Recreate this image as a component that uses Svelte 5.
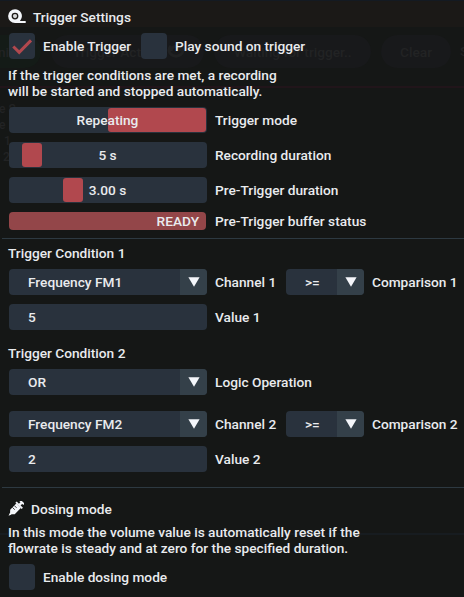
<script>
  const conditions = [
    { n: 1, channel: 'Frequency FM1', value: '5' },
    { n: 2, channel: 'Frequency FM2', value: '2', logic: 'OR' }
  ];
</script>

{#snippet combo(text, small = false)}
  <div class="field combo" class:small>
    <span>{text}</span>
    <div class="arrow">
      <svg width="12" height="10" viewBox="0 0 12 10"><path d="M.4 .3H11.6L6 9.8z" fill="#f4f6fa" /></svg>
    </div>
  </div>
{/snippet}

<div class="panel">
  <div class="backdrop" aria-hidden="true">
    <div class="titleband"></div>
    <div class="pill green" style="left:-40px;width:81px"><span style="left:38px">ni</span></div>
    <div class="pill" style="left:51px;width:153px"><span style="left:22px">Trigger Act</span>
      <svg style="left:116px" width="18" height="18" viewBox="0 0 18 18"><path d="M4 4a7 6 0 1 0 10 0M4 9a4 4 0 0 1 9 0" fill="none" stroke="#202122" stroke-width="3" /></svg>
    </div>
    <div class="pill" style="left:214px;width:157px"><span style="left:20px">Waiting for trigger..</span></div>
    <div class="pill" style="left:381px;width:70px"><span style="left:19px">Clear</span></div>
    <span class="ghost" style="left:460px;top:43px">S</span>
    <div class="redline"></div>
    <span class="ghost tiny" style="left:-1px;top:101px">e S</span>
    <span class="ghost tiny" style="left:-1px;top:117px">e</span>
    <span class="ghost tiny" style="left:4px;top:133px">1</span>
    <span class="ghost tiny" style="left:3px;top:149px">2</span>
    <div class="trace"></div>
  </div>

  <div class="content">
    <div class="head">
      <svg width="18" height="16" viewBox="0 0 18 16">
        <path fill-rule="evenodd" fill="#f4f6fa" d="M7 .2a6.8 6.8 0 0 1 5.7 10.6l-.8 1.3H17.7V14H7A6.9 6.9 0 0 1 7 .2zM7 3.7a3.4 3.4 0 1 0 0 6.8a3.4 3.4 0 0 0 0-6.8z" />
        <circle cx="7" cy="7.1" r="2.1" fill="#d5d6d8" />
      </svg>
      <span class="title">Trigger Settings</span>
    </div>
    <div class="row checks">
      <div class="box">
        <svg width="26" height="26" viewBox="0 0 26 26"><path d="M4.3 13.5L10.2 19.4L22 7.4" fill="none" stroke="#b1484e" stroke-width="3" /></svg>
      </div>
      <span class="enable">Enable Trigger</span>
      <div class="box"></div>
      <span>Play sound on trigger</span>
    </div>
    <p class="first">If the trigger conditions are met, a recording<br />will be started and stopped automatically.</p>

    <div class="row"><div class="field slider"><i style="left:99px;width:98px"></i><b>Repeating</b></div><span>Trigger mode</span></div>
    <div class="row"><div class="field slider"><i style="left:13px;width:20px"></i><b>5 s</b></div><span>Recording duration</span></div>
    <div class="row"><div class="field slider"><i style="left:54px;width:20px"></i><b>3.00 s</b></div><span>Pre-Trigger duration</span></div>
    <div class="row status"><div class="progress">READY</div><span>Pre-Trigger buffer status</span></div>
    <div class="rule"></div>

    {#each conditions as c}
      <div class="cond" class:second={c.n === 2}>Trigger Condition {c.n}</div>
      {#if c.logic}
        <div class="row logic">{@render combo(c.logic)}<span>Logic Operation</span></div>
      {/if}
      <div class="row">
        {@render combo(c.channel)}<span class="channel">Channel {c.n}</span>
        {@render combo('>=', true)}<span>Comparison {c.n}</span>
      </div>
      <div class="row"><div class="field input">{c.value}</div><span>Value {c.n}</span></div>
    {/each}
    <div class="rule last"></div>

    <div class="head dosing">
      <svg width="16" height="16" viewBox="0 0 16 16">
        <g fill="#f4f6fa" transform="translate(8 7.4) rotate(45)">
          <rect x="-2.8" y="-9.4" width="5.6" height="1.9" />
          <rect x="-1.2" y="-8.5" width="2.4" height="4" />
          <rect x="-4.4" y="-5.4" width="8.8" height="1.9" />
          <path d="M-3.2 -3.6H3.2V5L1 7.4V8L0 10.5L-1 8V7.4L-3.2 5z" />
          <path d="M-3.2 -.8H0M-3.2 1.8H0" stroke="#151716" stroke-width=".8" />
        </g>
      </svg>
      <span class="title">Dosing mode</span>
    </div>
    <p class="second-p">In this mode the volume value is automatically reset if the<br />flowrate is steady and at zero for the specified duration.</p>
    <div class="row dose"><div class="box"></div><span>Enable dosing mode</span></div>
  </div>
</div>

<style>
  :global(body) { margin: 0; background: #151716; }
  .panel {
    position: relative; width: 464px; height: 597px; overflow: hidden; box-sizing: border-box;
    background: #151716; color: #e9ebee;
    font: 500 13.7px/16px Roboto, sans-serif; white-space: nowrap;
  }
  .backdrop { position: absolute; inset: 0; color: #222324; }
  .titleband { height: 26px; background: #1b1917; border-top: 1px solid #141a22; }
  .pill { position: absolute; top: 35px; height: 33px; border-radius: 17px; background: #18191b; }
  .pill.green { background: #141b17; }
  .pill span { position: absolute; top: 9px; font-size: 13.7px; }
  .pill svg { position: absolute; top: 7px; }
  .ghost { position: absolute; font-size: 13.7px; }
  .ghost.tiny { font-size: 12px; }
  .redline { position: absolute; top: 86px; left: 0; width: 464px; height: 2px; background: #21151a; }
  .trace { position: absolute; top: 533px; left: 0; width: 464px; height: 2px; background: #171c20; }
  .content { position: relative; padding-left: 9px; }
  .head { display: flex; height: 16px; padding-top: 9px; margin-left: -1px; }
  .head .title { margin-left: 7px; }
  .row { display: flex; align-items: center; height: 26px; margin-bottom: 9px; }
  .row > span { margin-left: 8px; }
  .row.checks { margin-top: 8px; margin-bottom: 8px; }
  .row .enable { width: 90px; margin-right: 8px; }
  .box { width: 26px; height: 26px; border-radius: 4px; background: #29323d; }
  .box svg { display: block; }
  p { margin: 0 0 0 -1px; line-height: 16px; }
  .first { margin-bottom: 8px; }
  .field { position: relative; display: flex; align-items: center; width: 198px; height: 26px; border-radius: 4px; background: #29323d; overflow: hidden; box-sizing: border-box; flex: none; }
  .slider { justify-content: center; }
  .slider i { position: absolute; top: 1px; height: 24px; border-radius: 3px; background: #b1484e; }
  .slider b { position: relative; font-weight: 500; margin-right: 1px; }
  .combo { justify-content: space-between; padding-left: 19px; }
  .combo.small { width: 78px; }
  .arrow { display: flex; align-items: center; justify-content: center; width: 27px; height: 26px; background: #344049; }
  .input { padding-left: 19px; }
  .row.status { height: 18px; margin-bottom: 8px; }
  .progress { width: 197px; height: 18px; margin-right: 1px; padding-right: 7px; border-radius: 4px; background: #934649; text-align: right; line-height: 19px; box-sizing: border-box; }
  .rule { height: 1px; margin-left: -7px; background: #2d3941; }
  .cond { height: 16px; margin: 6px 0 8px -1px; }
  .cond.second { margin-top: 15px; }
  .row.logic { margin-bottom: 16px; }
  .row .channel { width: 71px; }
  .rule.last { margin-top: 15px; }
  .head.dosing { padding-top: 13px; }
  .second-p { margin-top: 7px; margin-bottom: 8px; }
</style>
